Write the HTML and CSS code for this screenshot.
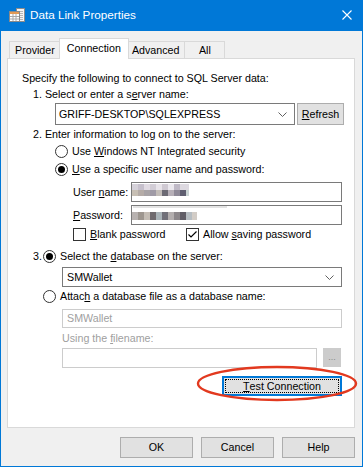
FILE: index.html
```html
<!DOCTYPE html>
<html lang="en">
<head>
    <meta charset="UTF-8">
    <title>Data Link Properties</title>
    <link rel="stylesheet" href="styles.css">
</head>
<body>
<div class="window">
    <div class="titlebar">
        <svg class="app-icon" width="16" height="16" viewBox="0 0 16 16">
            <rect x="7.5" y="1.5" width="8" height="13" fill="#f4f4f4" stroke="#8c8c8c"/>
            <path d="M9 4.5h5M9 6.5h5M9 8.5h5M9 10.5h5M9 12.5h5" stroke="#b5b5b5"/>
            <rect x="0.5" y="4.5" width="10" height="10" fill="#ffffff" stroke="#8a8a8a"/>
            <rect x="1" y="5" width="9" height="2" fill="#e39a55"/>
            <path d="M1 9.5h9M1 12h9M4 7v7M7 7v7" stroke="#a9a9a9"/>
        </svg>
        <span class="title">Data Link Properties</span>
        <svg class="close" width="10" height="10" viewBox="0 0 10 10">
            <path d="M0.5 0.5L9.5 9.5M9.5 0.5L0.5 9.5" stroke="#fff" stroke-width="1.1"/>
        </svg>
    </div>

    <div class="tabs">
        <div class="tab">Provider</div>
        <div class="tab active">Connection</div>
        <div class="tab">Advanced</div>
        <div class="tab">All</div>
    </div>

    <div class="panel">
        <div class="line">Specify the following to connect to SQL Server data:</div>
        <div class="line step">1. Select or enter a s<u>e</u>rver name:</div>
        <div class="server-row">
            <div class="combo server">
                <span>GRIFF-DESKTOP\SQLEXPRESS</span>
                <svg class="chevron" width="9" height="5" viewBox="0 0 9 5"><path d="M0.5 0.5L4.5 4.5L8.5 0.5" fill="none" stroke="#606060"/></svg>
            </div>
            <div class="btn refresh"><u>R</u>efresh</div>
        </div>
        <div class="line step step2">2. Enter information to log on to the server:</div>
        <div class="option first">
            <span class="radio"></span>
            <span>Use <u>W</u>indows NT Integrated security</span>
        </div>
        <div class="option">
            <span class="radio checked"></span>
            <span><u>U</u>se a specific user name and password:</span>
        </div>
        <div class="field-row">
            <span class="field-label">User <u>n</u>ame:</span>
            <div class="textbox login"><span class="mosaic user"></span></div>
        </div>
        <div class="field-row pw">
            <span class="field-label"><u>P</u>assword:</span>
            <div class="textbox login"><span class="pw-hint"></span><span class="mosaic pass"></span></div>
        </div>
        <div class="checks">
            <div class="check-item blank">
                <span class="checkbox"></span>
                <span><u>B</u>lank password</span>
            </div>
            <div class="check-item">
                <span class="checkbox">
                    <svg width="11" height="11" viewBox="0 0 11 11"><path d="M1.5 5.5L4 8L9.5 2.5" fill="none" stroke="#000" stroke-width="1.2"/></svg>
                </span>
                <span>Allow <u>s</u>aving password</span>
            </div>
        </div>
        <div class="db-step">
            <span class="num">3.</span>
            <span class="radio checked"></span>
            <span>Select the <u>d</u>atabase on the server:</span>
        </div>
        <div class="combo database">
            <span>SMWallet</span>
            <svg class="chevron" width="9" height="5" viewBox="0 0 9 5"><path d="M0.5 0.5L4.5 4.5L8.5 0.5" fill="none" stroke="#606060"/></svg>
        </div>
        <div class="attach">
            <span class="radio"></span>
            <span>Attac<u>h</u> a database file as a database name:</span>
        </div>
        <div class="textbox disabled db-name">SMWallet</div>
        <div class="line using">Using the <u>f</u>ilename:</div>
        <div class="file-row">
            <div class="textbox disabled file"></div>
            <div class="btn browse">...</div>
        </div>
        <div class="test-row">
            <div class="btn focused"><u>T</u>est Connection</div>
        </div>
    </div>

    <div class="buttons">
        <div class="btn">OK</div>
        <div class="btn">Cancel</div>
        <div class="btn">Help</div>
    </div>

    <svg class="highlight" width="164" height="38" viewBox="0 0 164 38">
        <ellipse cx="81" cy="18.5" rx="79" ry="16.5" fill="none" stroke="#e2391f" stroke-width="2.4"/>
    </svg>
</div>
</body>
</html>
```

FILE: styles.css
```css
*{
    margin: 0;
    padding: 0;
}
body{
    background: #f0f0f0;
}
.window{
    position: relative;
    width: 363px;
    height: 467px;
    box-sizing: border-box;
    border: 1px solid #0078d7;
    border-top: 0;
    background: #f0f0f0;
    font: 10.7px/13px "Liberation Sans", Arial, sans-serif;
    color: #000;
}
u{
    text-decoration: underline;
    text-underline-offset: 1px;
}

/* title bar */
.titlebar{
    display: flex;
    align-items: center;
    height: 31px;
    margin: 0 -1px;
    padding-left: 9px;
    background: #0078d7;
    color: #fff;
}
.app-icon{
    margin-top: -1px;
}
.title{
    margin-left: 5px;
    font: 11.7px "Liberation Sans", Arial, sans-serif;
    margin-top: -2px;
}
.close{
    margin-left: auto;
    margin-right: 11px;
    margin-top: -2px;
}

/* tabs */
.tabs{
    display: flex;
    align-items: flex-end;
    height: 20px;
    margin: 7px 0 0 8px;
}
.tab{
    box-sizing: border-box;
    height: 17px;
    min-width: 41px;
    padding: 0 5px;
    border: 1px solid #d9d9d9;
    border-bottom: 0;
    background: #f0f0f0;
    line-height: 16px;
    text-align: center;
    margin-left: -1px;
}
.tab:first-child{
    margin-left: 0;
}
.tab.active{
    position: relative;
    z-index: 1;
    height: 21px;
    padding: 1px 7px 0;
    margin: 0 -2px -1px;
    background: #fff;
}

/* panel */
.panel{
    box-sizing: border-box;
    height: 370px;
    margin: 0 7px 0 6px;
    padding: 13px 11px 0 14px;
    border: 1px solid #d9d9d9;
    background: #fff;
}
.line{
    height: 13px;
    white-space: nowrap;
}
.step{
    margin: 3px 0 0 11px;
}
.server-row{
    display: flex;
    gap: 2px;
    margin: 2px 0 0 33px;
}
.combo, .textbox{
    box-sizing: border-box;
    flex-shrink: 0;
    display: flex;
    align-items: center;
    border: 1px solid #7a7a7a;
    background: #fff;
    padding-left: 3px;
    white-space: nowrap;
}
.chevron{
    margin-left: auto;
    margin-right: 7px;
}
.combo.server{
    width: 240px;
    height: 22px;
}
.btn{
    box-sizing: border-box;
    flex-shrink: 0;
    display: flex;
    align-items: center;
    justify-content: center;
    border: 1px solid #adadad;
    background: #e1e1e1;
    white-space: nowrap;
}
.btn.refresh{
    width: 47px;
    height: 22px;
}
.step2{
    margin-top: 3px;
}

/* radio + checkbox */
.option{
    display: flex;
    align-items: center;
    gap: 4px;
    height: 13px;
    margin: 5px 0 0 33px;
}
.option.first{
    margin-top: 4px;
}
.radio{
    box-sizing: border-box;
    flex-shrink: 0;
    display: flex;
    align-items: center;
    justify-content: center;
    width: 13px;
    height: 13px;
    border: 1px solid #333;
    border-radius: 50%;
    background: #fff;
}
.radio.checked::after{
    content: "";
    width: 7px;
    height: 7px;
    border-radius: 50%;
    background: #000;
}
.field-row{
    display: flex;
    align-items: center;
    margin: 6px 0 0 51px;
}
.field-row.pw{
    margin-top: 3px;
}
.field-label{
    width: 58px;
    flex-shrink: 0;
}
.textbox.login{
    width: 211px;
    height: 20px;
    padding-left: 0;
    flex-direction: column;
    align-items: flex-start;
}
.mosaic{
    display: block;
    background-repeat: no-repeat;
}
.mosaic.user{
    width: 57px;
    height: 12px;
    margin-top: 1px;
    background-image:
        linear-gradient(90deg, #d5d1d9 0 6px, #c6c0cc 6px 12px, #e1dbe3 12px 18px, #d2cdd6 18px 24px, #e8e4ea 24px 30px, #cfc9d2 30px 36px, #ebe8ee 36px 42px, #bfb9c6 42px 48px, #ddd9e0 48px 57px),
        linear-gradient(90deg, #c7bfb4 0 6px, #b5aca7 6px 12px, #a8a3a6 12px 18px, #9f9aa6 18px 24px, #c2bcb8 24px 30px, #6c6a74 30px 36px, #b7b0b8 36px 42px, #8f8a98 42px 48px, #5f5e70 48px 54px, #c9d3d3 54px 57px);
    background-size: 57px 6px, 57px 6px;
    background-position: 0 0, 0 6px;
}
.pw-hint{
    display: block;
    width: 94px;
    height: 2px;
    margin-left: 1px;
    background: #e3e3e3;
}
.mosaic.pass{
    width: 65px;
    height: 8px;
    margin-top: 4px;
    background-image: linear-gradient(90deg, #b8b2b0 0 6px, #9d968f 6px 12px, #c4bdb5 12px 18px, #6f6a6e 18px 24px, #a9b3b8 24px 30px, #706f78 30px 36px, #b3aeae 36px 42px, #8c878a 42px 48px, #605d66 48px 54px, #b6bdc2 54px 60px, #d2ccc6 60px 65px);
}
.checks{
    display: flex;
    height: 13px;
    margin: 3px 0 0 51px;
}
.check-item{
    display: flex;
    align-items: center;
    gap: 4px;
}
.check-item.blank{
    width: 113px;
}
.checkbox{
    box-sizing: border-box;
    display: flex;
    width: 13px;
    height: 13px;
    border: 1px solid #333;
    background: #fff;
}

/* database */
.db-step{
    display: flex;
    align-items: center;
    height: 13px;
    margin: 9px 0 0 11px;
}
.num{
    width: 10px;
}
.db-step .radio{
    margin-right: 4px;
}
.combo.database{
    width: 280px;
    height: 20px;
    margin: 4px 0 0 40px;
    padding-left: 4px;
}
.attach{
    display: flex;
    align-items: center;
    gap: 4px;
    height: 13px;
    margin: 3px 0 0 21px;
}
.textbox.disabled{
    border-color: #cccccc;
    color: #a0a0a0;
}
.db-name{
    width: 280px;
    height: 19px;
    margin: 6px 0 0 40px;
    padding-left: 4px;
}
.using{
    margin: 4px 0 0 40px;
    color: #a0a0a0;
}
.file-row{
    display: flex;
    gap: 6px;
    margin: 3px 0 0 40px;
}
.textbox.file{
    width: 255px;
    height: 20px;
}
.btn.browse{
    width: 18px;
    height: 19px;
    border-color: #cccccc;
    background: #cccccc;
    color: #8a8a8a;
    font-size: 9px;
}
.test-row{
    display: flex;
    justify-content: flex-end;
    margin-top: 8px;
    padding-right: 1px;
}
.btn.focused{
    position: relative;
    width: 120px;
    height: 20px;
    border: 2px solid #0078d7;
}
.btn.focused::after{
    content: "";
    position: absolute;
    top: 1px;
    left: 1px;
    right: 1px;
    bottom: 1px;
    border: 1px dotted #000;
}

/* dialog buttons */
.buttons{
    display: flex;
    justify-content: flex-end;
    gap: 8px;
    margin: 9px 7px 0 0;
}
.buttons .btn{
    width: 73px;
    height: 21px;
}

/* red marker drawn over the test button */
.highlight{
    position: absolute;
    left: 195px;
    top: 365px;
}
```
